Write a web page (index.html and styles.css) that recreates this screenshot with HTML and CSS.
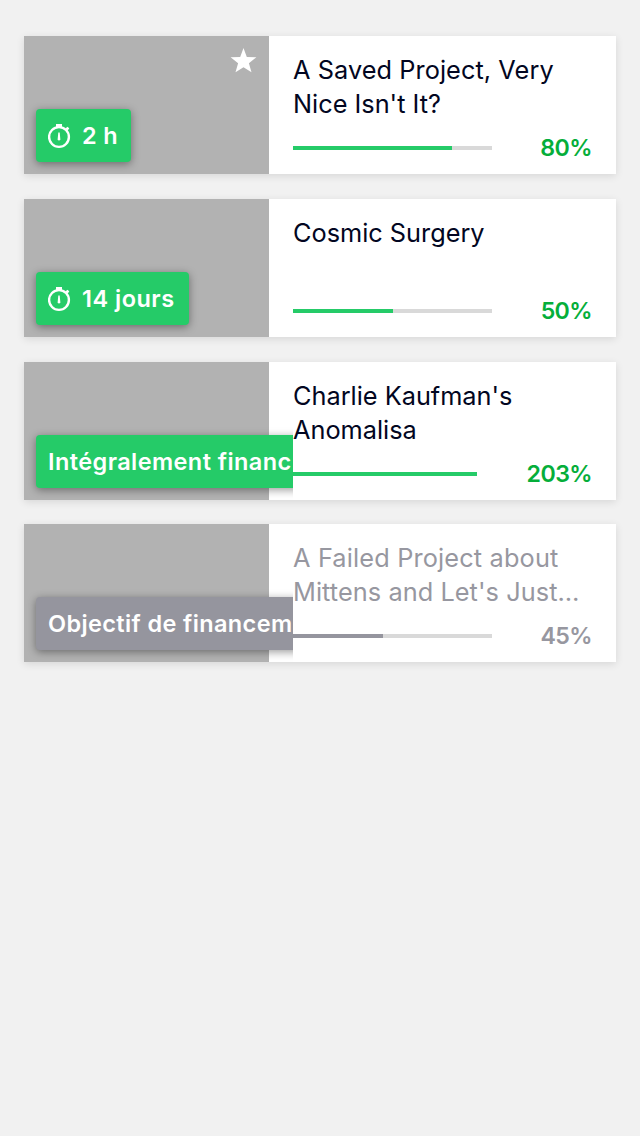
FILE: index.html
```html
<!DOCTYPE html>
<html lang="fr">
<head>
<meta charset="utf-8">
<title>Projets</title>
<link rel="stylesheet" href="styles.css">
</head>
<body>
<main class="list">
  <article class="card">
    <div class="photo">
      <svg class="star" viewBox="0 0 26 25"><path d="M12.500 0l3.300 8.900 9.600.4-7.500 6 2.600 9-8-5.100-8 5.100 2.600-9L-.4 9.300l9.600-.4z"/></svg>
      <div class="badge"><svg class="clock" viewBox="0 0 24 26"><circle cx="11" cy="14" r="9.900"/><path class="solid" d="M8 1h6v3.500H8zM17.300 5.700l2-2 2 1.500-1.700 2.500zM10.300 9.500h1.400l.7 7.200q-1.400 1.500-2.800 0z"/></svg><span class="t-hour">2 h</span></div>
    </div>
    <div class="info">
      <h2 class="title"><span class="t1">A Saved Project, Very</span><span>Nice Isn't It?</span></h2>
      <div class="stats"><div class="track"><div class="fill" style="width:80%"></div></div><span class="percent">80%</span></div>
    </div>
  </article>
  <article class="card">
    <div class="photo">
      <div class="badge badge-days"><svg class="clock" viewBox="0 0 24 26"><circle cx="11" cy="14" r="9.900"/><path class="solid" d="M8 1h6v3.500H8zM17.300 5.700l2-2 2 1.500-1.700 2.500zM10.300 9.500h1.400l.7 7.200q-1.400 1.500-2.800 0z"/></svg><span class="t-days">14 jours</span></div>
    </div>
    <div class="info">
      <h2 class="title"><span>Cosmic Surgery</span></h2>
      <div class="stats"><div class="track"><div class="fill" style="width:50%"></div></div><span class="percent">50%</span></div>
    </div>
  </article>
  <article class="card">
    <div class="photo">
      <div class="badge badge-wide"><span class="t-funded">Intégralement financ</span></div>
    </div>
    <div class="info">
      <h2 class="title"><span>Charlie Kaufman's</span><span>Anomalisa</span></h2>
      <div class="stats"><div class="track track-short"><div class="fill" style="width:100%"></div></div><span class="percent">203%</span></div>
    </div>
  </article>
  <article class="card failed">
    <div class="photo">
      <div class="badge badge-wide"><span class="t-failed">Objectif de financem</span></div>
    </div>
    <div class="info">
      <h2 class="title"><span class="t6">A Failed Project about</span><span class="t7">Mittens and Let's Just…</span></h2>
      <div class="stats"><div class="track"><div class="fill" style="width:45%"></div></div><span class="percent">45%</span></div>
    </div>
  </article>
</main>
</body>
</html>
```
FILE: styles.css
```css
* { box-sizing: border-box; }
body { margin: 0; min-height: 1136px; background: #f1f1f1; font-family: Inter, Roboto, sans-serif; }
.list { display: flex; flex-direction: column; gap: 25px; padding: 36px 24px; }
.card { position: relative; display: flex; height: 138px; background: #fff; box-shadow: 0 2px 8px rgba(0,0,0,.11); }
.failed { margin-top: -1px; }
.photo { width: 245px; flex: none; background: #b2b2b2; padding: 12px; display: flex; flex-direction: column; }
.star { width: 26px; height: 25px; align-self: flex-end; fill: #fff; overflow: visible; }
.badge { margin-top: auto; align-self: flex-start; display: flex; align-items: center; width: 95px; height: 53px; padding: 0 12px; border-radius: 4px; background: #25cb68; color: #fff; font-size: 23.5px; font-weight: 600; white-space: nowrap; box-shadow: 0 2px 8px rgba(0,0,0,.4); }
.badge-days { width: 153px; }
.badge-wide { width: 300px; }
.photo:has(.badge-wide) { width: 269px; margin-right: -24px; background: linear-gradient(90deg, #b2b2b2 245px, #fff 245px); overflow: hidden; }
.photo .badge-wide { flex: none; }
.t-hour { letter-spacing: .3px; }
.t-days { letter-spacing: .5px; }
.t-funded { letter-spacing: .42px; }
.t-failed { letter-spacing: .38px; }
.clock { width: 24px; height: 26px; margin-right: 10px; fill: none; stroke: #fff; stroke-width: 2.4; flex: none; }
.solid { fill: #fff; stroke: none; }
.info { flex: 1; padding: 17px 24px 10px; display: flex; flex-direction: column; justify-content: space-between; }
.title { margin: 0; color: #020621; font-size: 25.3px; line-height: 34px; font-weight: 400; white-space: nowrap; }
.title span { display: block; }
.title .t1, .title .t7 { letter-spacing: .07px; }
.title .t6 { letter-spacing: .16px; }
.stats { display: flex; align-items: center; justify-content: space-between; height: 32px; }
.track { width: 199px; height: 4px; background: #d9d9d9; }
.track-short { width: 184px; }
.fill { height: 4px; background: #25cb68; }
.percent { color: #05ae3a; font-size: 23.2px; line-height: 32px; font-weight: 600; letter-spacing: -.6px; }
.failed .badge, .failed .fill { background: #95959e; }
.failed .title, .failed .percent { color: #9797a0; }
```
